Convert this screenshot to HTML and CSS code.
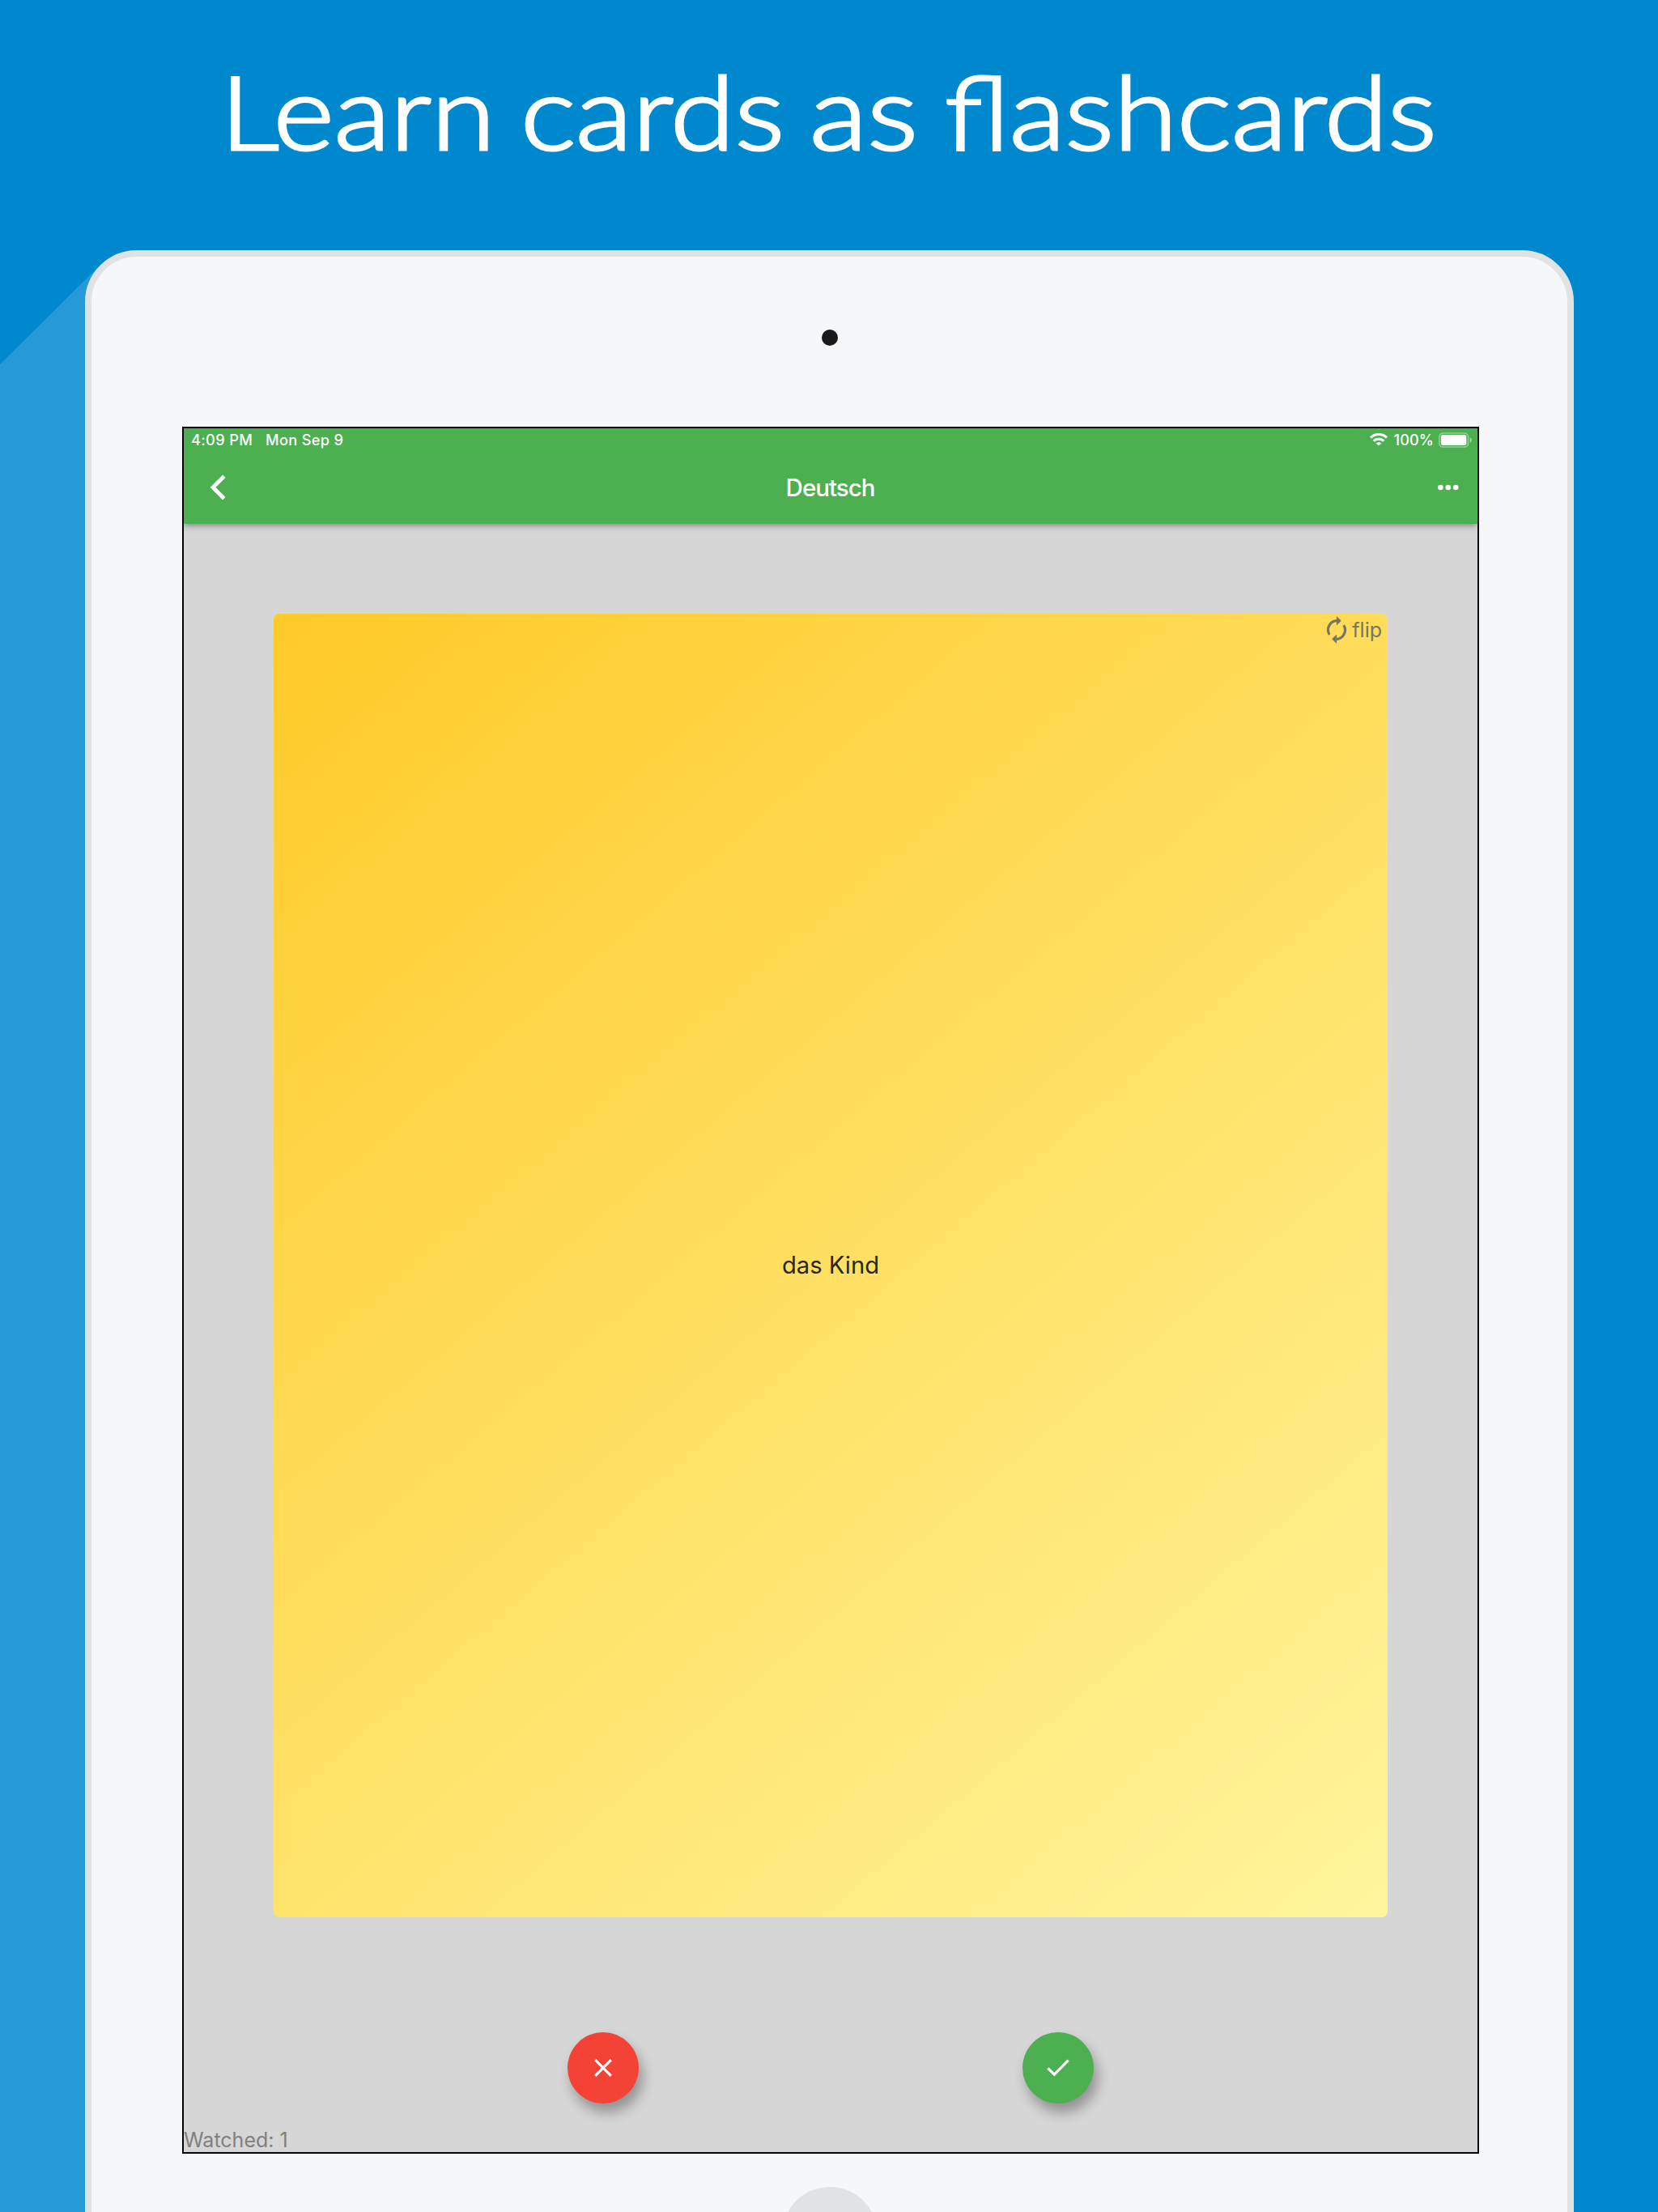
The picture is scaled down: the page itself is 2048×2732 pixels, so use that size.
FILE: index.html
```html
<!DOCTYPE html>
<html lang="en">
<head>
<meta charset="utf-8">
<title>Learn cards as flashcards</title>
<link rel="stylesheet" href="styles.css">
</head>
<body>
<main class="promo">
  <svg class="promo-shadow" width="180" height="2732" viewBox="0 0 180 2732" aria-hidden="true"><path d="M0 450 125 326H180V2732H0Z" fill="#269ad8"/></svg>
  <h1 class="headline"><span class="w1">Learn </span><span class="w2">cards </span><span class="w3">as </span><span class="w4">flashcards</span></h1>
  <div class="tablet">
    <div class="camera"></div>
    <div class="screen">
      <header class="appbar">
        <div class="status">
          <span class="time">4:09 PM</span>
          <span class="date">Mon Sep 9</span>
          <svg class="wifi" width="22" height="16" viewBox="0 0 22 16" fill="none" stroke="#fff" stroke-width="3.2"><path d="M1 5.6A14.3 14.3 0 0 1 21 5.6M4.7 9.7A9 9 0 0 1 17.3 9.7"/><path d="M11 15.6 7.7 12.5A4.8 4.8 0 0 1 14.3 12.5Z" fill="#fff" stroke="none"/></svg>
          <span class="percent">100%</span>
          <svg class="battery" width="42" height="19" viewBox="0 0 42 19"><rect x=".9" y=".9" width="35.6" height="17.2" rx="4.6" fill="none" stroke="#fff" stroke-opacity=".42" stroke-width="1.5"/><rect x="2.9" y="2.9" width="31.4" height="13.2" rx="2.4" fill="#fff"/><path d="M38.7 6.3Q41 7.2 41 9.5T38.7 12.7Z" fill="#fff" fill-opacity=".5"/></svg>
        </div>
        <div class="toolbar">
          <svg class="back" width="20" height="32" viewBox="0 0 20 32" fill="none" stroke="#fff" stroke-width="4.8"><path d="M17.8 2.2 4 16 17.8 29.8"/></svg>
          <span class="title">Deutsch</span>
          <svg class="more" width="26" height="8" viewBox="0 0 26 8" fill="#fff"><circle cx="3.4" cy="4" r="3.3"/><circle cx="12.8" cy="4" r="3.3"/><circle cx="22.2" cy="4" r="3.3"/></svg>
        </div>
      </header>
      <section class="card">
        <div class="flip">
          <svg width="26" height="34" viewBox="0 0 26 34" fill="none" stroke="#777564" stroke-width="3.2"><path d="M4.2 22.8A11.2 11.2 0 0 1 13.5 5.7M21.8 11.2A11.2 11.2 0 0 1 12.5 28.3"/><path d="M12.9 0V11.4L18.8 5.7ZM13.1 22.6V34L7.2 28.3Z" fill="#777564" stroke="none"/></svg>
          <span>flip</span>
        </div>
        <p class="word"><span>das Kind</span></p>
      </section>
      <div class="actions">
        <button class="fab wrong" aria-label="Wrong"><svg width="22" height="22" viewBox="0 0 22 22" fill="none" stroke="#fff" stroke-width="3.1"><path d="M1.2 1.2 20.8 20.8M20.8 1.2 1.2 20.8"/></svg></button>
        <button class="fab right" aria-label="Right"><svg width="28" height="22" viewBox="0 0 28 22" fill="none" stroke="#fff" stroke-width="3.1"><path d="M1.4 11.3 9.3 19.2 26.6 1.6"/></svg></button>
      </div>
      <p class="watched"><span>Watched: 1</span></p>
    </div>
    <div class="home"></div>
  </div>
</main>
</body>
</html>
```
FILE: styles.css
```css
* { box-sizing: border-box; }
body { margin: 0; font-family: Inter, "Liberation Sans", sans-serif; }
h1, p { margin: 0; }
svg { display: block; flex: none; }
.promo { position: relative; width: 2048px; height: 2732px; overflow: hidden; background: #0088ce; display: flex; flex-direction: column; }
.promo-shadow { position: absolute; left: 0; top: 0; }
.headline { height: 309px; flex: none; padding: 59px 0 0 272px; display: grid; grid-template-columns: 371px 357px 167px 620px; font: 300 126px/156px Lato, sans-serif; color: #fff; white-space: nowrap; -webkit-text-stroke: 3.2px #fff; }
.headline span { transform-origin: left; }
.w1 { transform: scaleX(1.14); }
.w2 { transform: scaleX(1.146); }
.w3 { transform: scaleX(1.17); }
.w4 { transform: scaleX(1.127); }
.tablet { position: relative; flex: none; width: 1839px; height: 2600px; margin-left: 105px; border: 8px solid #e1e2e4; border-radius: 64px; background: #f5f7f9; display: flex; flex-direction: column; align-items: center; }
.camera { width: 20px; height: 20px; margin-top: 90px; border-radius: 50%; background: #1a1a1a; flex: none; }
.screen { width: 1602px; height: 2133px; margin-top: 100px; margin-left: 3px; border: 2px solid #000; background: #d6d6d6; display: flex; flex-direction: column; flex: none; }
.appbar { height: 118px; flex: none; background: #4caf50; color: #fff; box-shadow: 0 2px 8px rgba(0,0,0,.4); clip-path: inset(0 0 -20px 0); }
.status { height: 28px; display: flex; align-items: center; padding: 0 6px 0 9px; font-size: 18.2px; font-weight: 500; letter-spacing: .33px; white-space: nowrap; }
.date { margin-left: 16px; }
.wifi { margin-left: auto; }
.percent { margin-left: 8px; letter-spacing: .1px; }
.battery { margin-left: 6px; }
.toolbar { height: 90px; display: grid; grid-template-columns: 1fr auto 1fr; align-items: center; padding: 0 23px 0 32px; }
.title { font-size: 29.5px; font-weight: 550; letter-spacing: -1px; position: relative; left: -5px; }
.more { justify-self: end; }
.card { width: 1376px; height: 1610px; margin: 111px 0 0 111px; flex: none; border-radius: 7px; background: linear-gradient(139.5deg, #ffca28, #fff59d); display: flex; flex-direction: column; }
.flip { height: 40px; display: flex; align-items: center; justify-content: flex-end; gap: 6px; padding-right: 7px; color: #777564; font-size: 25px; }
.word { flex: 1; display: flex; align-items: center; justify-content: center; padding-bottom: 42px; font-size: 29.2px; color: #2a2720; }
.actions { display: flex; justify-content: space-evenly; margin-top: 142px; }
.fab { width: 88px; height: 88px; border: 0; padding: 0; border-radius: 50%; display: grid; place-items: center; box-shadow: 5px 11px 16px rgba(0,0,0,.32); }
.wrong { background: #f44336; }
.right { background: #4caf50; }
.watched { margin-top: auto; font-size: 25px; line-height: 30px; color: #808080; white-space: nowrap; }
.home { width: 118px; height: 118px; margin: 41px 0 0 1px; border-radius: 50%; background: #e1e2e4; flex: none; }
```
